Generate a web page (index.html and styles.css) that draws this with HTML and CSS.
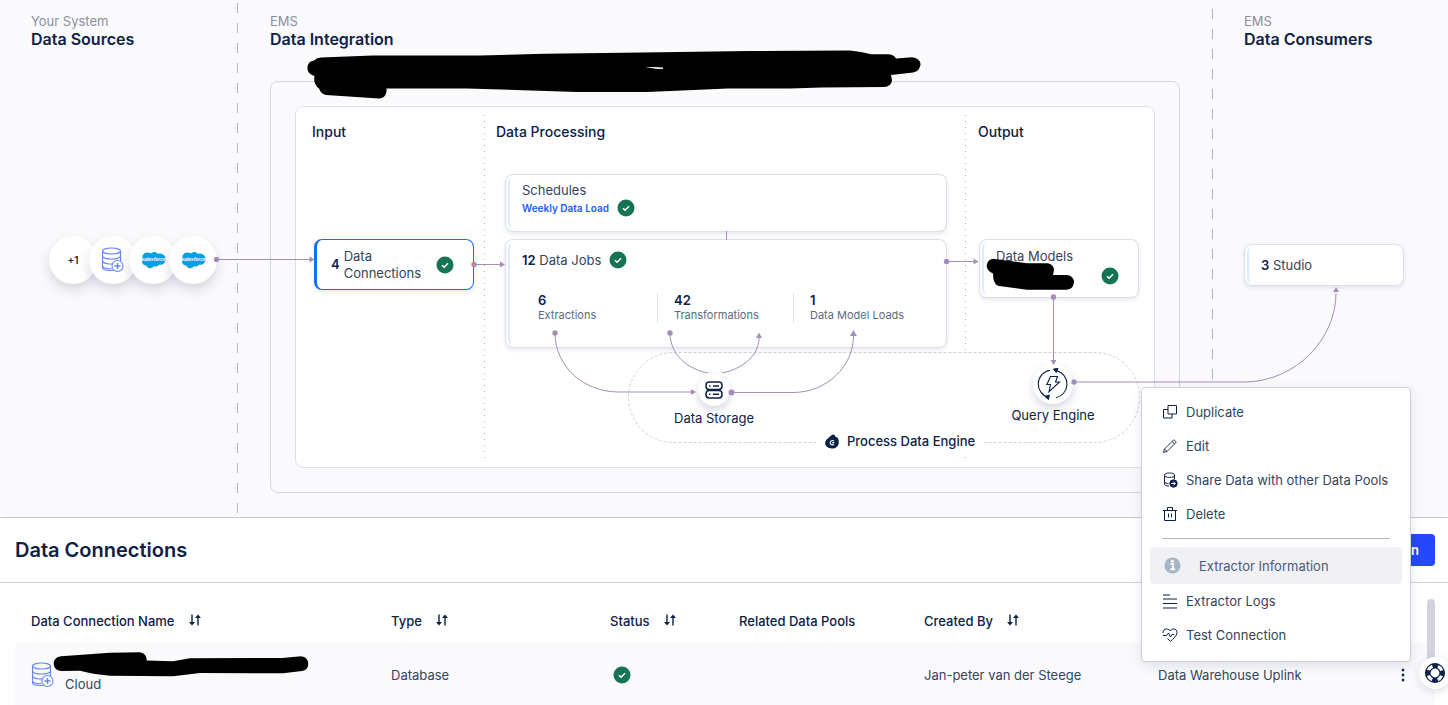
FILE: index.html
```
<!DOCTYPE html>
<html lang="en">
<head>
<meta charset="utf-8">
<title>Data Integration</title>
<link rel="stylesheet" href="styles.css">
</head>
<body>
<svg class="defs" aria-hidden="true">
  <symbol id="check" viewBox="0 0 18 18"><circle cx="9" cy="9" r="8.5" fill="#177355"/><path d="M6 9.2l2.1 2L12 7.3" fill="none" stroke="#fff" stroke-width="1.5"/></symbol>
  <symbol id="database" viewBox="0 0 24 26"><g fill="none" stroke="#6684f4" stroke-width="1.1"><ellipse cx="10.5" cy="4" rx="9" ry="3"/><path d="M1.500 4v17c0 1.500 4 2.500 8 2.500h3M19.500 4v10M1.500 9c1 4 17 4 18 0M1.500 14c1 3 9 3.500 12 2.500M1.500 19c1 2 5 3 9 2.500"/><circle cx="16.500" cy="19" r="5.500" fill="#fff"/><path d="M16.500 16v6M13.500 19h6" stroke-width="1.400"/></g></symbol>
  <symbol id="salesforce" viewBox="0 0 25 18"><path d="M10.300 2.600C12 0.400 15.200 0.600 16.500 3c4-1.500 8 1 8.100 5 .1 4-3.300 6.400-6.700 5.700-1.200 1.900-3.500 2.200-5 1.300-1.500 3-6.500 3-7.700-.5C2 15-.5 10.600 1.800 7.900-.1 3.500 5-.7 10.300 2.600z" fill="#00a1e0"/><text x="12.500" y="9.800" text-anchor="middle" class="logo-word">salesforce</text></symbol>
  <symbol id="sort" viewBox="0 0 12 12"><path d="M3 .5v9M9 11.500V2.500" fill="none" stroke="#0c2146" stroke-width="1.400"/><path d="M0 8h6l-3 3.500zM6 4h6L9 .5z" fill="#0c2146"/></symbol>
</svg>

<main class="page">
  <section class="board">
    <div class="lane lane-sources">
      <p class="lane-kicker">Your System</p>
      <h2 class="lane-title">Data Sources</h2>
    </div>
    <div class="lane lane-integration">
      <p class="lane-kicker">EMS</p>
      <h2 class="lane-title">Data Integration</h2>
      <div class="pool">
        <div class="stages">
          <h3 class="stage stage-input">Input</h3>
          <h3 class="stage stage-processing">Data Processing</h3>
          <h3 class="stage">Output</h3>
        </div>
      </div>
    </div>
    <div class="lane lane-consumers">
      <p class="lane-kicker">EMS</p>
      <h2 class="lane-title">Data Consumers</h2>
    </div>

    <svg class="layer" viewBox="0 0 1448 517" width="1448" height="517" aria-hidden="true">
      <g fill="none">
        <path d="M237.500 3V514M1212.500 9V380" stroke="#b4b4c6" stroke-dasharray="10 10"/>
        <path d="M484.500 115V460M965.500 115V460" stroke="#aeaebb" stroke-dasharray="1 5"/>
        <rect x="628.500" y="352.500" width="511" height="90" rx="45" fill="#fff" stroke="#d0d0d8" stroke-dasharray="3 2"/>
      </g>
    </svg>

    <div class="sources">
      <span class="source source-more">+1</span>
      <span class="source"><svg class="icon-db"><use href="#database"/></svg></span>
      <span class="source"><svg class="icon-sf"><use href="#salesforce"/></svg></span>
      <span class="source"><svg class="icon-sf"><use href="#salesforce"/></svg></span>
    </div>

    <article class="node node-connections">
      <b>4</b><span class="node-name">Data Connections</span><svg class="check"><use href="#check"/></svg>
    </article>

    <article class="node node-schedules">
      <div class="node-line">Schedules</div>
      <div class="node-line"><a class="schedule-link" href="#">Weekly Data Load</a><svg class="check"><use href="#check"/></svg></div>
    </article>

    <article class="node node-jobs">
      <div class="node-line"><span><b>12</b> Data Jobs</span><svg class="check"><use href="#check"/></svg></div>
      <div class="counts">
        <div class="count"><b>6</b><span>Extractions</span></div>
        <div class="count"><b>42</b><span>Transformations</span></div>
        <div class="count"><b>1</b><span>Data Model Loads</span></div>
      </div>
    </article>

    <article class="node node-models">
      <span class="models-name">Data Models</span><svg class="check"><use href="#check"/></svg>
    </article>

    <article class="node node-studio"><span><b>3</b> Studio</span></article>

    <div class="engine-label">
      <svg width="14" height="15" viewBox="0 0 14 15"><path d="M7 1c2-1.500 3 0 3.300 1.500C13 3 14 5.500 13.800 8.500 13.500 12.500 10.500 14.500 7 14.500S.2 12.500.2 9.300C.2 6 2.500 5 4 3.500 5 2.700 5.500 1.500 7 1z" fill="#0c2146"/><path d="M9 7.200a2.200 2.200 0 1 0 0 3M9.300 8.600H7.200" fill="none" stroke="#fff" stroke-width="1.100"/></svg>
      Process Data Engine
    </div>

    <figure class="hub hub-storage">
      <span class="hub-disc disc-small"><svg width="18" height="18" viewBox="0 0 18 18"><g fill="none" stroke="#0c2146" stroke-width="1.500"><rect x="1" y="1" width="16" height="7.500" rx="3.200"/><rect x="1" y="9.500" width="16" height="7.500" rx="3.200"/><path d="M4 5h1.500M8 5h6M4 13.200h1.500M8 13.200h6"/></g></svg></span>
      <figcaption>Data Storage</figcaption>
    </figure>
    <figure class="hub hub-query">
      <span class="hub-disc disc-large"><svg width="32" height="32" viewBox="0 0 32 32"><g fill="none" stroke="#0c2146" stroke-width="1.100"><path d="M13 2.200A14 14 0 0 0 11.500 29.500M19 29.800A14 14 0 0 0 19.500 2.600"/><path d="M13.500 8.500h7l-2 5.500h4L12 23.700l1.500-7.200H9.800z"/></g><path d="M16.500 1l4.500-.5-1.800 4zM8 28.500l4.300-1.500-.8 4.500z" fill="#0c2146" stroke="#0c2146"/></svg></span>
      <figcaption>Query Engine</figcaption>
    </figure>

    <svg class="layer" viewBox="0 0 1448 517" width="1448" height="517" aria-hidden="true">
      <g fill="none" stroke="#a48db6">
        <path d="M217 259.500H311M474 264.500H501M726.500 231V240M947 261.500H975M1053.500 298V361M732 392.500H793C827 392.500 853.500 366 853.500 336"/>
        <path d="M555 333C555 366 583 392 619 392H692M670 333C670 354 687 369 708 373M722 373C743 369 759 355 759 338M1074 382H1246C1296 381 1336 339 1336 293"/>
      </g>
      <g fill="#a48db6">
        <circle cx="216.500" cy="259.500" r="2.700"/><circle cx="474" cy="264.500" r="2.700"/><circle cx="946.500" cy="261.500" r="2.700"/><circle cx="1053.500" cy="297" r="2.700"/><circle cx="555" cy="333" r="2.700"/><circle cx="670" cy="333" r="2.700"/><circle cx="731.500" cy="392.500" r="3"/><circle cx="1074" cy="382" r="2.700"/>
        <path d="M309.500 256.500v6l5-3zM500 261.500v6l5-3zM973.500 258.500v6l5-3zM1050.500 360h6l-3 5zM691 389v6l5-3zM756 338h6l-3-5.500zM850 336h7l-3.500-6zM1333 292h6l-3-5z"/>
      </g>
      <g class="redaction">
        <path d="M321 57.500L373 55.500H480L545 53.700 643 52.500 749 51 849 50.500Q858 51 871 54.300H888Q894 54.500 896 58.500L912 57.300Q920 58 920.500 64.500 920 71 913 72.500L891 75 892 80.500Q891 87 884 87L822 87.500 790 88.500H728L647 92H577L467 88.500H386.500V92Q385 98.500 379 98.500L326 95Q321 94 319 88.500 313 84 314.500 76 307 74 307.500 67.500 308 61 314 60.500 317 57.500 321 57.500z"/>
        <path d="M993 258.700L1027 263.300H1048Q1054 265 1054 270L1053 275H1067Q1074 276 1074 282.500 1073 289.700 1066 289.700H1027L999 286Q993 285 993 273.500 986.500 271 986.700 265.500 987.500 259.500 993 258.700z"/>
        <path class="gap" d="M645 67h10l8 .5v1.500h-6z"/>
      </g>
    </svg>
  </section>

  <section class="panel">
    <header class="panel-head">
      <h1 class="panel-title">Data Connections</h1>
      <button class="add" type="button">Add Connection</button>
    </header>
    <div class="panel-body">
      <table class="grid">
        <colgroup><col class="c-name"><col class="c-type"><col class="c-status"><col class="c-related"><col class="c-by"><col><col class="c-more"></colgroup>
        <thead>
          <tr>
            <th>Data Connection Name<svg class="sort"><use href="#sort"/></svg></th>
            <th>Type<svg class="sort"><use href="#sort"/></svg></th>
            <th>Status<svg class="sort"><use href="#sort"/></svg></th>
            <th>Related Data Pools</th>
            <th>Created By<svg class="sort"><use href="#sort"/></svg></th>
            <th></th>
            <th></th>
          </tr>
        </thead>
        <tbody>
          <tr>
            <td><div class="name"><svg class="icon-db"><use href="#database"/></svg><span class="name-text">Cloud</span>
              <svg class="name-redaction redaction" viewBox="53 651 256 26" width="256" height="26" aria-hidden="true"><path d="M61 656.300L110 652.700 140 652.300Q147 654 146.700 660.500L173 661.300 190 658.300 282 658 301 656.300Q308 657 308.300 664 308 670 302 671L283 673.300 200 673 173 676.300 110 675.700Q92 674 80 670.700L61 671Q54 670 53.700 663.700 54 657 61 656.300z"/></svg></div></td>
            <td>Database</td>
            <td><svg class="check"><use href="#check"/></svg></td>
            <td></td>
            <td>Jan-peter van der Steege</td>
            <td>Data Warehouse Uplink</td>
            <td><button class="more" type="button" aria-label="More actions"><svg width="4" height="14" viewBox="0 0 4 14"><path d="M.8.800h2.400v2.400H.8zM.8 5.800h2.400v2.400H.8zM.8 10.800h2.400v2.400H.8z" fill="#0c2146"/></svg></button></td>
          </tr>
        </tbody>
      </table>
      <div class="scroll-thumb"></div>
    </div>
  </section>

  <div class="menu" role="menu">
    <button class="item" type="button"><svg viewBox="0 0 16 16"><path d="M6 1.500h8.500V10H6zM6 5.500H1.500v8.500H10V10"/></svg>Duplicate</button>
    <button class="item" type="button"><svg viewBox="0 0 16 16"><path d="M1.500 14.500l1-3.500L11.800 1.700l2.500 2.500L5 13.500zM10 3.500L12.500 6M2.500 11L5 13.500" stroke-width=".9"/></svg>Edit</button>
    <button class="item" type="button"><svg viewBox="0 0 16 16"><ellipse cx="7.500" cy="3.200" rx="5" ry="2.200"/><path d="M2.500 3.200V12c0 1 1.500 2 4.500 2M12.500 3.200V7M2.500 10c.5 1 2 1.500 4 1.500"/><circle cx="11.500" cy="11.500" r="3.700" fill="#0c2146"/><path d="M9.300 11.500H13M11.500 9.700l1.800 1.800-1.800 1.800" stroke="#fff"/></svg>Share Data with other Data Pools</button>
    <button class="item" type="button"><svg viewBox="0 0 16 16"><path d="M1 4.500h14M5.500 4V1.500h5V4M2.500 4.500V14.500h11V4.500M6.500 7.500v4M9.500 7.500v4"/></svg>Delete</button>
    <hr class="rule">
    <button class="item item-active" type="button"><svg viewBox="0 0 17 17"><circle cx="8.500" cy="8.500" r="8" fill="#a6b6c6" stroke="none"/><path d="M6.500 7h2.500v5M6.200 12.300h5" stroke="#fff" stroke-width="1.800"/><circle cx="8.500" cy="4.200" r="1.400" fill="#fff" stroke="none"/></svg>Extractor Information</button>
    <button class="item" type="button"><svg viewBox="0 0 16 16"><path d="M1 2h7M1 6h14M1 10.500h14M1 15h14" stroke-width="1.200"/></svg>Extractor Logs</button>
    <button class="item" type="button"><svg viewBox="0 0 16 16"><path d="M1 6C.8 3.500 2.500 2 4.500 2S7.500 3 8.200 4C9 2.800 10 2 11.800 2c2 0 3.400 1.500 3.200 3.700C14.800 9 11 12 8.500 14.300L5.500 11.500M1 8.500h3.500l2-2.500 2 4L10 7.500h2.200"/></svg>Test Connection</button>
  </div>

  <button class="help" type="button" aria-label="Help"><svg width="22" height="22" viewBox="0 0 22 22"><g fill="none" stroke="#0c2146"><circle cx="11" cy="11" r="7.300" stroke-width="4.500" stroke-dasharray="5.700 5.770" stroke-dashoffset="2.850"/><circle cx="11" cy="11" r="9.400" stroke-width="1.200"/><circle cx="11" cy="11" r="5" stroke-width="1.200"/></g></svg></button>
</main>
</body>
</html>
```
FILE: styles.css
```
* { box-sizing: border-box; }

body {
  margin: 0;
  font: 400 13px/18px Inter, "Liberation Sans", sans-serif;
  color: #33455c;
  background: #fff;
}

h1, h2, h3, p, figure { margin: 0; }
b { font-weight: 600; color: #0c2146; }
button { font: inherit; color: inherit; border: 0; background: none; padding: 0; cursor: pointer; }
svg { display: block; flex: none; }

.defs { position: absolute; width: 0; height: 0; }
.logo-word { font: italic 700 5px "Liberation Sans", sans-serif; fill: #fff; }

.page {
  position: relative;
  min-height: 100vh;
  height: 100vh;
  overflow: hidden;
  display: flex;
  flex-direction: column;
}

/* Board */
.board {
  position: relative;
  flex: none;
  display: flex;
  min-height: 517px;
  overflow: hidden;
  background: #fafafc;
  border-radius: 0 0 6px 6px;
}

.lane { padding: 12px 0 24px 32px; flex: none; }
.lane-sources { width: 238px; padding-left: 31px; }
.lane-integration { width: 974px; padding-right: 32px; display: flex; flex-direction: column; }
.lane-consumers { flex: 1; }
.lane-kicker { color: #8c8e9e; }
.lane-title { font-size: 16px; line-height: 18px; font-weight: 600; color: #0c2146; }

.pool {
  flex: 1;
  display: flex;
  margin-top: 33px;
  padding: 24px;
  border: 1px solid #d4d4e0;
  border-radius: 8px;
}
.stages {
  flex: 1;
  display: flex;
  padding: 16px;
  background: #fff;
  border: 1px solid #dde0ea;
  border-radius: 8px;
}
.stage { font-size: 14px; line-height: 18px; font-weight: 500; color: #0c2146; }
.stage-input { width: 184px; }
.stage-processing { width: 482px; }

.layer { position: absolute; left: 0; top: 0; pointer-events: none; }
.redaction { fill: #000; }
.gap { fill: #e8e8e8; }

.check { width: 18px; height: 18px; }
.icon-db { width: 24px; height: 26px; }
.icon-sf { width: 25px; height: 18px; }

.sources { position: absolute; left: 49px; top: 236px; display: flex; }
.source {
  width: 48px;
  height: 48px;
  margin-right: -8px;
  display: flex;
  align-items: center;
  justify-content: center;
  border-radius: 50%;
  background: #fff;
  box-shadow: 0 6px 12px rgba(30, 40, 90, .16);
}
.source-more { font-size: 10px; font-weight: 600; color: #1d2733; }

.node {
  position: absolute;
  padding-left: 16px;
  background: #fff;
  border: 1px solid #dcdfea;
  border-radius: 8px;
  box-shadow: 0 2px 4px rgba(30, 40, 90, .1);
}
.node::before {
  content: "";
  position: absolute;
  inset: 2px auto 2px 2px;
  width: 6px;
  border-left: 2px solid #dcedfd;
  border-radius: 6px 0 0 6px;
}
.node-line { display: flex; align-items: center; gap: 8px; }
.node-connections {
  left: 314px;
  top: 239px;
  width: 160px;
  height: 51px;
  display: flex;
  align-items: center;
  gap: 4px;
  padding: 0 19px 0 14px;
  border: 1px solid #1270f2;
  border-left-width: 3px;
  line-height: 17px;
}
.node-connections::before { display: none; }
.node-name { flex: 1; }
.node-schedules { left: 505px; top: 174px; width: 442px; height: 58px; padding-top: 6px; }
.schedule-link { font-size: 10px; font-weight: 600; color: #1a5cff; text-decoration: none; }
.node-jobs { left: 505px; top: 239px; width: 442px; height: 109px; padding-top: 11px; }
.counts { display: flex; margin-top: 24px; padding-left: 16px; }
.count {
  width: 120px;
  margin-right: 16px;
  border-right: 1px solid #dfe1e8;
  font-size: 11px;
  line-height: 15px;
  color: #5a6b80;
  white-space: nowrap;
}
.count:last-child { border: 0; }
.count b { display: block; font-size: 13px; }
.node-models {
  left: 979px;
  top: 239px;
  width: 160px;
  height: 59px;
  display: flex;
  align-items: flex-end;
  justify-content: space-between;
  padding: 7px 19px 12px 16px;
}
.models-name { align-self: flex-start; }
.node-studio { left: 1244px; top: 244px; width: 160px; height: 42px; display: flex; align-items: center; }

.engine-label {
  position: absolute;
  left: 816px;
  top: 426px;
  display: flex;
  align-items: center;
  gap: 8px;
  padding: 6px 8px 6px 9px;
  background: #fff;
  font-weight: 500;
  color: #0c2146;
}

.hub { position: absolute; display: flex; flex-direction: column; align-items: center; color: #0c2146; }
.hub-storage { left: 654px; top: 374px; width: 120px; gap: 3px; }
.hub-query { left: 993px; top: 364px; width: 120px; gap: 2px; }
.hub-disc {
  display: flex;
  align-items: center;
  justify-content: center;
  border-radius: 50%;
  background: #fff;
  box-shadow: 0 4px 8px rgba(30, 40, 90, .18);
}
.disc-small { width: 32px; height: 32px; }
.disc-large { width: 40px; height: 40px; }

/* Connections panel */
.panel { flex: 1; border-top: 1px solid #c8c8d4; }
.panel-head {
  display: flex;
  align-items: center;
  justify-content: space-between;
  padding: 16px 13px 16px 15px;
  border-bottom: 1px solid #d2d2de;
}
.panel-title { font-size: 20px; line-height: 32px; font-weight: 600; color: #0c2146; }
.add {
  height: 32px;
  padding: 0 16px;
  border-radius: 4px;
  background: #2548ff;
  color: #fff;
  font-weight: 600;
}

.panel-body { position: relative; padding: 0 13px 0 15px; }
.grid { width: 100%; border-collapse: collapse; table-layout: fixed; }
.c-name { width: 360px; }
.c-type { width: 219px; }
.c-status { width: 129px; }
.c-related { width: 185px; }
.c-by { width: 234px; }
.c-more { width: 54px; }
.grid th {
  padding: 30px 0 14px 16px;
  line-height: 16px;
  text-align: left;
  font-weight: 500;
  color: #0c2146;
  white-space: nowrap;
}
.grid td { height: 64px; padding: 0 0 0 16px; background: #fafafc; }
.sort { display: inline-block; width: 12px; height: 12px; margin-left: 14px; }
.grid td .check { margin-left: 3px; }
.name { position: relative; display: flex; align-items: center; gap: 10px; }
.name-text { padding-top: 18px; }
.name-redaction { position: absolute; left: 22px; top: -6px; }
.more { display: flex; padding: 4px; }

.scroll-thumb {
  position: absolute;
  right: 13px;
  top: 16px;
  width: 8px;
  height: 72px;
  border-radius: 4px;
  background: #d3d3dd;
}

/* Row menu */
.menu {
  position: absolute;
  right: 37px;
  top: 387px;
  width: 270px;
  padding: 7px 8px 9px;
  background: #fff;
  border: 1px solid #d0d0da;
  border-radius: 4px;
  box-shadow: 0 4px 12px rgba(30, 40, 90, .12);
}
.item {
  display: flex;
  align-items: center;
  gap: 8px;
  width: 100%;
  height: 34px;
  padding: 0 12px;
  white-space: nowrap;
}
.item svg { width: 16px; height: 16px; fill: none; stroke: #0c2146; stroke-width: 1; }
.rule { margin: 7px 12px 8px; border: 0; border-top: 1px solid #b2b2c6; }
.item-active { height: 37px; gap: 18px; padding: 0 14px; border-radius: 4px; background: #f0f0f5; color: #4c5a72; }
.item-active svg { width: 17px; height: 17px; }

.help {
  position: absolute;
  right: -3px;
  bottom: 16px;
  width: 32px;
  height: 32px;
  display: flex;
  align-items: center;
  justify-content: center;
  border-radius: 50%;
  background: #fff;
  box-shadow: 0 2px 8px rgba(30, 40, 90, .16);
}
```
